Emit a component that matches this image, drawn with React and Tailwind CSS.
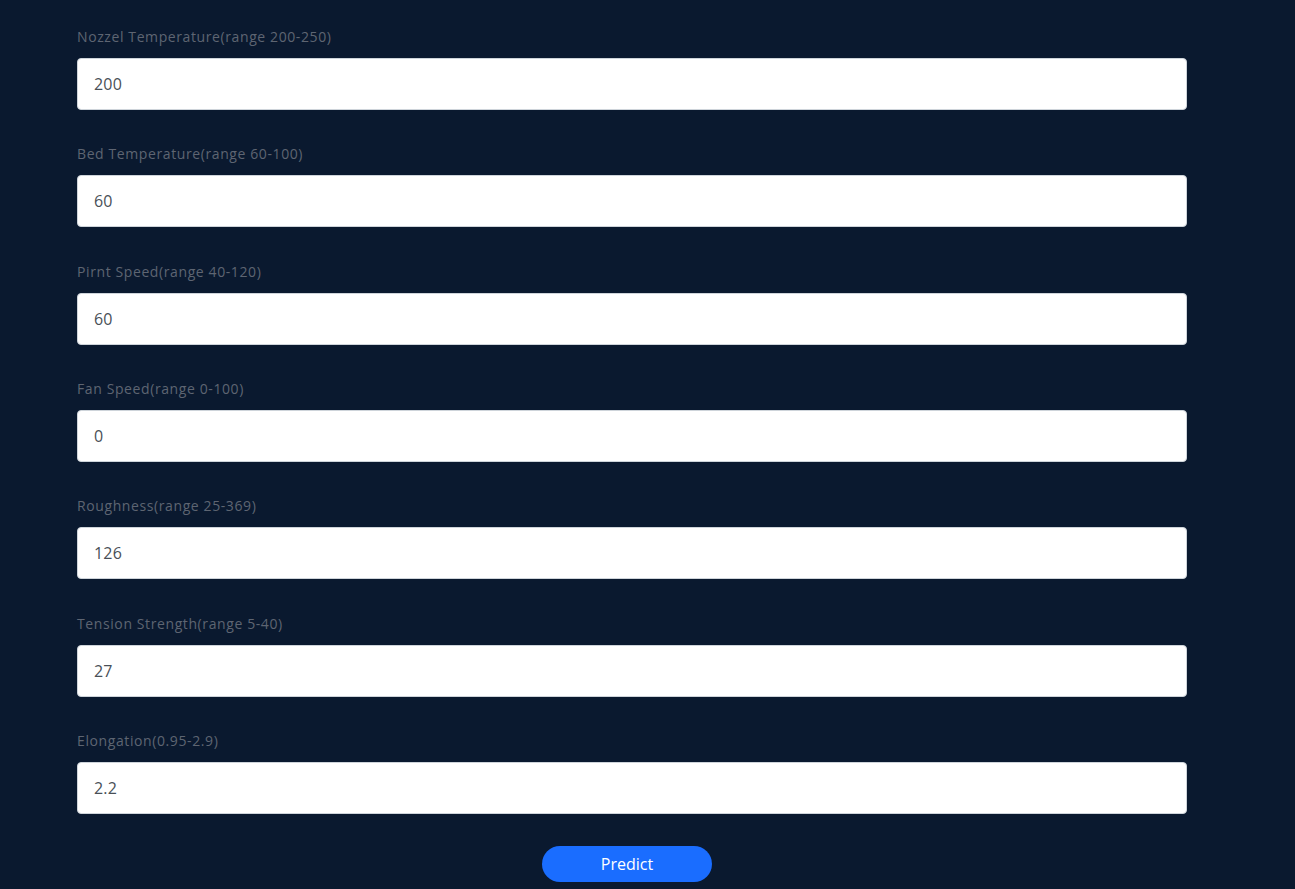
const FIELDS = [
  { label: "Nozzel Temperature(range 200-250)", value: "200" },
  { label: "Bed Temperature(range 60-100)", value: "60" },
  { label: "Pirnt Speed(range 40-120)", value: "60" },
  { label: "Fan Speed(range 0-100)", value: "0" },
  { label: "Roughness(range 25-369)", value: "126" },
  { label: "Tension Strength(range 5-40)", value: "27" },
  { label: "Elongation(0.95-2.9)", value: "2.2" },
];

const App = () => {
  return (
    <div
      className="min-h-screen bg-[#0a192f] pt-[26px] pb-[7px]"
      style={{ fontFamily: '"Open Sans", "Liberation Sans", sans-serif' }}
    >
      <form className="ml-[77px] w-[1110px] flex flex-col">
        {FIELDS.map((f) => (
          <div key={f.label} className="mb-[33.33px] flex flex-col">
            <label className="text-[14px] leading-[21px] tracking-[0.6px] text-[#5e6572] mb-[11px]">
              {f.label}
            </label>
            <input
              type="text"
              defaultValue={f.value}
              className="h-[52px] w-full rounded-[4px] border border-[#ced4da] bg-white pl-[16px] text-[16px] tracking-[0.2px] text-[#495057] outline-none"
            />
          </div>
        ))}
        <div className="-mt-[1px] flex">
          <button
            type="button"
            className="ml-[465px] h-[36px] w-[170px] rounded-full bg-[#1a6dff] text-[16px] font-medium text-white"
          >
            Predict
          </button>
        </div>
      </form>
    </div>
  );
};

export default App;
